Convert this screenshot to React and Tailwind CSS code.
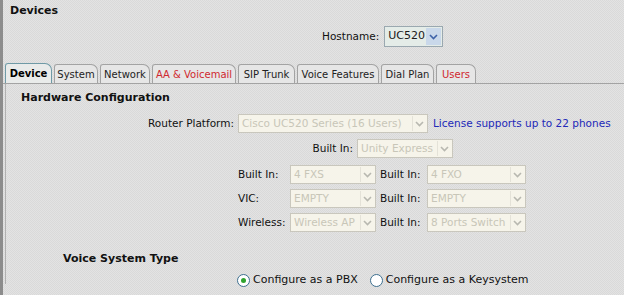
import React from "react";

const font = { fontFamily: '"DejaVu Sans", Verdana, sans-serif' };

function Chevron({ color = "#b8b8b0" }) {
  return (
    <svg width="9" height="6" viewBox="0 0 9 6">
      <path d="M1 1 L4.5 4.5 L8 1" fill="none" stroke={color} strokeWidth="1.6" />
    </svg>
  );
}

function DisabledSelect({ value, width }) {
  return (
    <div
      className="flex items-center h-[19px] border border-[#c9c7bd] bg-[#f6f4ea] pl-[3px] pr-[3px] text-[#c8c6b8] overflow-hidden"
      style={{ width }}
    >
      <span className="flex-1 whitespace-nowrap overflow-hidden">{value}</span>
      <span className="flex items-center justify-center w-[12px] h-[15px] border-l border-[#e4e2d8] pl-[2px]">
        <Chevron />
      </span>
    </div>
  );
}

function Tab({ label, active, red, width }) {
  return (
    <div
      className={
        "flex items-center justify-center mr-[2px] border border-b-0 rounded-tl-[3px] rounded-tr-[7px] text-[10px] whitespace-nowrap " +
        (active
          ? "border-[#6f9aa6] bg-[#e9ebea] font-bold text-black h-[20px]"
          : "h-[19px] border-[#a3a3a3] bg-[#e6e6e6] " + (red ? "text-[#d0282f]" : "text-[#222]"))
      }
      style={{ width }}
    >
      {label}
    </div>
  );
}

function Radio({ checked }) {
  return (
    <span className="w-[13px] h-[13px] rounded-full border border-[#3d6f8f] bg-white flex items-center justify-center">
      {checked && <span className="w-[5px] h-[5px] rounded-full bg-[#2fa32f]" />}
    </span>
  );
}

export default function App() {
  const tabs = [
    ["Device", true, false, 47],
    ["System", false, false, 44],
    ["Network", false, false, 50],
    ["AA & Voicemail", false, true, 84],
    ["SIP Trunk", false, false, 57],
    ["Voice Features", false, false, 82],
    ["Dial Plan", false, false, 53],
    ["Users", false, true, 40],
  ];

  const rows = [
    ["Built In:", "4 FXS", "4 FXO"],
    ["VIC:", "EMPTY", "EMPTY"],
    ["Wireless:", "Wireless AP", "8 Ports Switch"],
  ];

  return (
    <div
      className="w-[624px] h-[295px] overflow-hidden border-l-[3px] border-[#8c8c8c] text-[10.5px] text-[#111] bg-[repeating-conic-gradient(#d9d9d9_0_25%,#e3e3e3_0_50%)] bg-[length:2px_2px]"
      style={font}
    >
      <div className="pl-[7px] pt-[4px] font-bold text-[11px] leading-[14px]">Devices</div>

      <div className="flex items-center mt-[8px] pl-[319px]">
        <span className="mr-[5px]">Hostname:</span>
        <div className="flex items-center h-[21px] w-[59px] border border-[#9aa8b0] bg-[#e4ece8]">
          <span className="flex-1 pl-[3px] text-[11px] text-[#1a1a1a]">UC520</span>
          <span className="w-[15px] h-[17px] mr-[1px] bg-[#c9d8ea] flex items-center justify-center">
            <Chevron color="#3f63a8" />
          </span>
        </div>
      </div>

      <div className="flex items-end mt-[17px] pl-[2px] border-b border-[#a3a3a3] h-[20px]">
        {tabs.map(([label, active, red, width]) => (
          <Tab key={label} label={label} active={active} red={red} width={width} />
        ))}
      </div>

      <div className="ml-[2px] border-l border-[#b0b0b0] h-[200px]">
        <div className="pl-[15px] pt-[7px] font-bold text-[11px] leading-[14px]">Hardware Configuration</div>

        <div className="flex items-center mt-[9px]">
          <span className="w-[232px] text-right pr-[4px]">Router Platform:</span>
          <DisabledSelect value="Cisco UC520 Series (16 Users)" width={190} />
          <span className="ml-[5px] text-[#2228b8] whitespace-nowrap">License supports up to 22 phones</span>
        </div>

        <div className="flex items-center mt-[6px]">
          <span className="w-[351px] text-right pr-[4px]">Built In:</span>
          <DisabledSelect value="Unity Express" width={96} />
        </div>

        <div className="mt-[7px] flex flex-col gap-[5px]">
          {rows.map(([label, a, b]) => (
            <div key={label} className="flex items-center">
              <span className="ml-[232px] w-[52px]">{label}</span>
              <DisabledSelect value={a} width={86} />
              <span className="ml-[4px] w-[47px]">Built In:</span>
              <DisabledSelect value={b} width={99} />
            </div>
          ))}
        </div>

        <div className="pl-[57px] mt-[20px] font-bold text-[11px] leading-[14px]">Voice System Type</div>

        <div className="flex items-center mt-[6px] pl-[231px] text-[11px]">
          <Radio checked />
          <span className="ml-[3px] mr-[12px]">Configure as a PBX</span>
          <Radio />
          <span className="ml-[3px]">Configure as a Keysystem</span>
        </div>
      </div>
    </div>
  );
}
